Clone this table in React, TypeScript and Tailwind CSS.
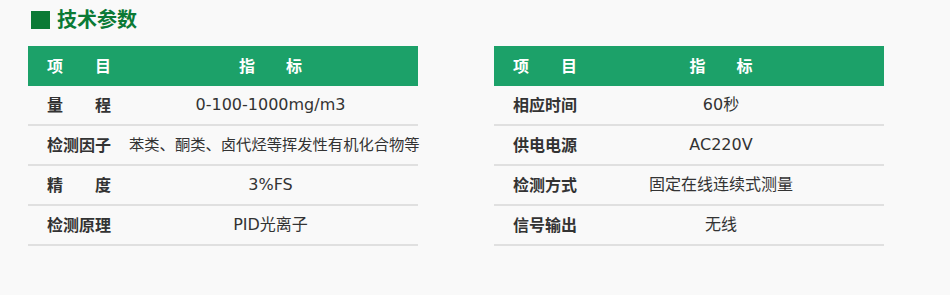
type Row = { label: string; value: string; small?: boolean };

const left: Row[] = [
  { label: "量程", value: "0-100-1000mg/m3" },
  { label: "检测因子", value: "苯类、酮类、卤代烃等挥发性有机化合物等", small: true },
  { label: "精度", value: "3%FS" },
  { label: "检测原理", value: "PID光离子" },
];

const right: Row[] = [
  { label: "相应时间", value: "60秒" },
  { label: "供电电源", value: "AC220V" },
  { label: "检测方式", value: "固定在线连续式测量" },
  { label: "信号输出", value: "无线" },
];

function Label({ text }: { text: string }) {
  // two-character labels are spread to the width of four characters
  if (text.length === 2) {
    return (
      <span className="flex w-[64px] justify-between">
        <span>{text[0]}</span>
        <span>{text[1]}</span>
      </span>
    );
  }
  return <span className="whitespace-nowrap">{text}</span>;
}

function SpecTable({ rows, labelWidth }: { rows: Row[]; labelWidth: string }) {
  return (
    <div className="w-[390px]">
      {/* Header */}
      <div className="flex h-[40px] items-center bg-[#1ca169] text-[16px] font-bold text-white">
        <div className={`${labelWidth} shrink-0 pl-[19px]`}>
          <span className="flex w-[64px] justify-between">
            <span>项</span>
            <span>目</span>
          </span>
        </div>
        <div className="flex flex-1 justify-center gap-[31px]">
          <span>指</span>
          <span>标</span>
        </div>
      </div>

      {/* Rows */}
      {rows.map((r) => (
        <div
          key={r.label}
          className="flex h-[40px] items-center border-b-2 border-[#e0e0e0]"
        >
          <div className={`${labelWidth} shrink-0 pl-[19px] text-[16px] font-bold text-[#333]`}>
            <Label text={r.label} />
          </div>
          <div
            className={`flex-1 whitespace-nowrap text-center text-[#333] font-['DejaVu_Sans','Noto_Sans_CJK_SC',sans-serif] ${
              r.small ? "pl-[6px] text-[15.3px]" : "text-[16px]"
            }`}
          >
            {r.value}
          </div>
        </div>
      ))}
    </div>
  );
}

export default function App() {
  return (
    <div className="h-[295px] w-[950px] bg-[#f9f9f9] pt-[10px] font-['Noto_Sans','Noto_Sans_CJK_SC',sans-serif]">
      <div className="flex items-center gap-[7px] pl-[31px]">
        <span className="h-[18px] w-[19px] bg-[#0b7a35]" />
        <h2 className="text-[20px] font-bold leading-[20px] text-[#0b7a35]">技术参数</h2>
      </div>

      <div className="mt-[16px] flex gap-[76px] pl-[28px]">
        <SpecTable rows={left} labelWidth="w-[95px]" />
        <SpecTable rows={right} labelWidth="w-[64px]" />
      </div>
    </div>
  );
}
